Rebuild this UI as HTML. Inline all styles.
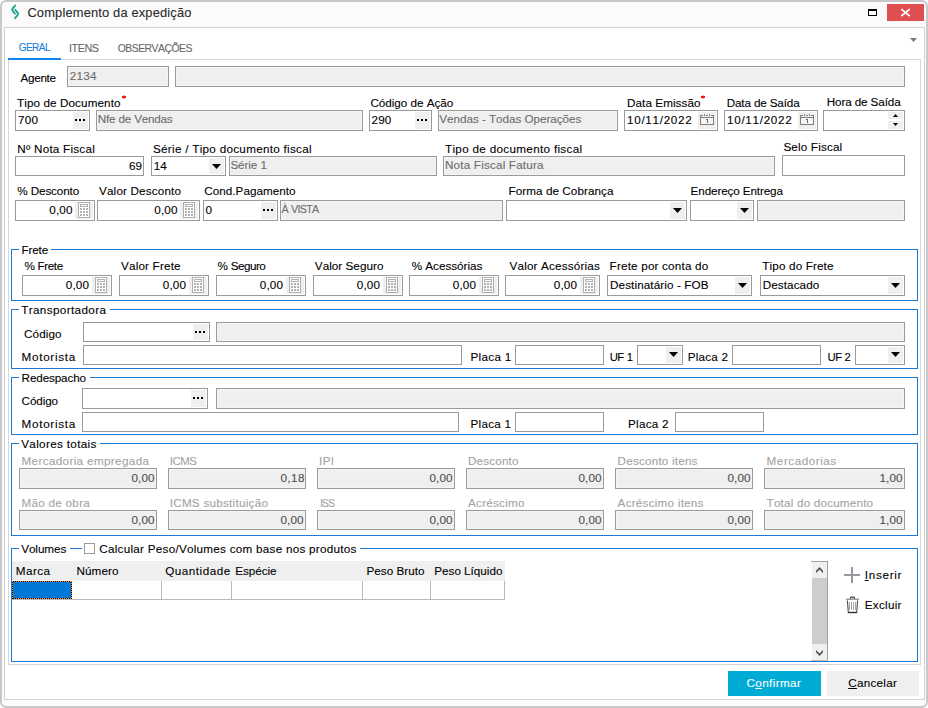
<!DOCTYPE html>
<html lang="pt-BR"><head><meta charset="utf-8"><title>Complemento da expedição</title>
<style>
html,body{margin:0;padding:0;background:#fff}
body{width:928px;height:708px;position:relative;overflow:hidden;font-family:"Liberation Sans",sans-serif;font-size:11.7px}
i,b,svg,#win,#inner,#tab{position:absolute;display:block;box-sizing:border-box}
b{font-weight:normal;font-style:normal;white-space:nowrap;line-height:1;color:#000;font-kerning:none;font-variant-ligatures:none;-webkit-text-stroke:0.1px currentColor}
u{text-decoration:underline;text-underline-offset:1px;text-decoration-thickness:1px}
i.b{border:1px solid #9a9a9a;background:#fff}
i.d{background:#efefef;box-shadow:inset 0 0 0 1px #f4f4f4}
#win{left:0;top:0;width:928px;height:708px;border:2px solid #c9c9c9;border-radius:6px;background:#fbfbfb}
#inner{left:4px;top:27px;width:921px;height:673px;border:1px solid #d2d2d2;background:#fff}
#tab{left:8px;top:59px;width:913px;height:606px;border:1px solid #d6d6d6;background:#fff}
</style></head>
<body>
<div id="win"></div>
<div id="inner"></div>
<svg style="left:9px;top:3px" width="12" height="18" viewBox="9 3 12 18"><path d="M15.2 5.5L12.5 8.7Q11.8 9.6 12.5 10.5L14.9 13.7" fill="none" stroke="#0f9f84" stroke-width="1.8" stroke-linecap="round" stroke-linejoin="round"/><path d="M15.2 9.8L17.7 12.9Q18.4 13.8 17.7 14.7L15.1 18.2" fill="none" stroke="#0f9f84" stroke-width="1.8" stroke-linecap="round" stroke-linejoin="round"/></svg>
<b style="left:27.40px;top:7.00px;font-size:12.9px;letter-spacing:0.154px;color:#2b2b2b">Complemento da expedição</b>
<i style="left:868px;top:9px;width:9px;height:7px;border:1px solid #000;border-top-width:2px;box-sizing:border-box;background:#fff"></i>
<i style="left:887px;top:4px;width:37px;height:17px;background:#e04f4f;"></i>
<svg style="left:900px;top:8px" width="11" height="9" viewBox="0 0 11 9"><path d="M1.3 1.2L9.7 8M9.7 1.2L1.3 8" stroke="#fff" stroke-width="1.7" fill="none"/></svg>
<div id="tab"></div>
<i style="left:8px;top:58px;width:53px;height:2px;background:#0f86ee;"></i>
<b style="left:18.70px;top:43.00px;font-size:10.0px;letter-spacing:-0.510px;color:#1a7fd8">GERAL</b>
<b style="left:69.00px;top:43.00px;font-size:10.8px;letter-spacing:-0.448px;color:#686868">ITENS</b>
<b style="left:117.70px;top:44.00px;font-size:10.4px;letter-spacing:-0.495px;color:#686868">OBSERVAÇÕES</b>
<svg style="left:910px;top:38px" width="7" height="4" viewBox="0 0 7 4"><path d="M0 0H7L3.5 4Z" fill="#7a7a7a"/></svg>
<b style="left:20.40px;top:72.00px;letter-spacing:-0.269px">Agente</b>
<i class="b d" style="left:67px;top:66px;width:102px;height:21px"></i>
<b style="left:69.80px;top:70.00px;letter-spacing:0.200px;color:#6d6d6d">2134</b>
<i class="b d" style="left:175px;top:66px;width:730px;height:21px"></i>
<b style="left:17.00px;top:97.00px;letter-spacing:0.094px">Tipo de Documento</b>
<i style="left:123px;top:95px;width:2px;height:4px;background:#ffab8e;"></i>
<i style="left:122px;top:96px;width:4px;height:2px;background:#fb1212;"></i>
<i class="b" style="left:15px;top:110px;width:75px;height:21px"></i>
<i style="left:73px;top:112px;width:15px;height:17px;background:#efefef;"></i>
<i style="left:75px;top:119px;width:2px;height:2px;background:#000;"></i>
<i style="left:79px;top:119px;width:2px;height:2px;background:#000;"></i>
<i style="left:83px;top:119px;width:2px;height:2px;background:#000;"></i>
<b style="left:18.00px;top:114.00px;letter-spacing:0.250px">700</b>
<i class="b d" style="left:96px;top:110px;width:267px;height:21px"></i>
<b style="left:97.70px;top:113.00px;letter-spacing:-0.248px;word-spacing:0.248px;color:#6d6d6d">Nfe de Vendas</b>
<b style="left:370.40px;top:97.00px;letter-spacing:-0.029px">Código de Ação</b>
<i class="b" style="left:369px;top:110px;width:63px;height:21px"></i>
<i style="left:415px;top:112px;width:15px;height:17px;background:#efefef;"></i>
<i style="left:417px;top:119px;width:2px;height:2px;background:#000;"></i>
<i style="left:421px;top:119px;width:2px;height:2px;background:#000;"></i>
<i style="left:425px;top:119px;width:2px;height:2px;background:#000;"></i>
<b style="left:371.60px;top:114.00px;letter-spacing:0.050px">290</b>
<i class="b d" style="left:438px;top:110px;width:180px;height:21px"></i>
<b style="left:439.30px;top:113.00px;letter-spacing:-0.038px;color:#6d6d6d">Vendas - Todas Operações</b>
<b style="left:627.00px;top:97.00px;letter-spacing:0.068px">Data Emissão</b>
<i style="left:702px;top:95px;width:2px;height:4px;background:#ffab8e;"></i>
<i style="left:701px;top:96px;width:4px;height:2px;background:#fb1212;"></i>
<i class="b" style="left:624px;top:110px;width:94px;height:21px"></i>
<i style="left:698px;top:112px;width:18px;height:17px;background:#efefef;"></i>
<svg style="left:700px;top:114px" width="14" height="11" viewBox="0 0 14 11" shape-rendering="crispEdges"><rect x="0.5" y="3.5" width="13" height="7" fill="#f4f4f4" stroke="#808080"/><path d="M0.5 1V4 M13.5 1V4" stroke="#808080" fill="none"/><path d="M1 1.5H3 M6 1.5H8 M11 1.5H13" stroke="#808080" fill="none"/><path d="M4.5 0V2 M9.5 0V2" stroke="#808080" fill="none"/><path d="M6 5.5H7.5V9" stroke="#6a6a6a" fill="none"/></svg>
<b style="left:627.00px;top:114.00px;letter-spacing:0.689px">10/11/2022</b>
<b style="left:726.70px;top:97.00px;letter-spacing:-0.144px">Data de Saída</b>
<i class="b" style="left:724px;top:110px;width:94px;height:21px"></i>
<i style="left:798px;top:112px;width:18px;height:17px;background:#efefef;"></i>
<svg style="left:800px;top:114px" width="14" height="11" viewBox="0 0 14 11" shape-rendering="crispEdges"><rect x="0.5" y="3.5" width="13" height="7" fill="#f4f4f4" stroke="#808080"/><path d="M0.5 1V4 M13.5 1V4" stroke="#808080" fill="none"/><path d="M1 1.5H3 M6 1.5H8 M11 1.5H13" stroke="#808080" fill="none"/><path d="M4.5 0V2 M9.5 0V2" stroke="#808080" fill="none"/><path d="M6 5.5H7.5V9" stroke="#6a6a6a" fill="none"/></svg>
<b style="left:727.00px;top:114.00px;letter-spacing:0.689px">10/11/2022</b>
<b style="left:826.70px;top:96.00px;letter-spacing:-0.114px">Hora de Saída</b>
<i class="b" style="left:823px;top:110px;width:82px;height:21px"></i>
<i style="left:888px;top:112px;width:15px;height:7px;background:#efefef;"></i>
<i style="left:888px;top:121px;width:15px;height:8px;background:#efefef;"></i>
<svg style="left:893px;top:114px" width="5" height="3" viewBox="0 0 5 3"><path d="M0 3H5L2.5 0Z" fill="#000"/></svg>
<svg style="left:893px;top:123px" width="5" height="3" viewBox="0 0 5 3"><path d="M0 0H5L2.5 3Z" fill="#000"/></svg>
<b style="left:17.30px;top:143.00px;letter-spacing:0.237px">Nº Nota Fiscal</b>
<i class="b" style="left:15px;top:156px;width:129px;height:20px"></i>
<b style="left:129.00px;top:160.00px">69</b>
<b style="left:153.00px;top:143.00px;letter-spacing:0.282px">Série / Tipo documento fiscal</b>
<i class="b" style="left:151px;top:156px;width:75px;height:20px"></i>
<i style="left:209px;top:158px;width:15px;height:16px;background:#efefef;"></i>
<svg style="left:212px;top:164px" width="9" height="5" viewBox="0 0 9 5"><path d="M0 0H9L4.5 5Z" fill="#000"/></svg>
<b style="left:153.80px;top:160.00px">14</b>
<i class="b d" style="left:229px;top:156px;width:208px;height:20px"></i>
<b style="left:230.40px;top:159.00px;letter-spacing:-0.089px;color:#6d6d6d">Série 1</b>
<b style="left:445.00px;top:143.00px;letter-spacing:0.311px">Tipo de documento fiscal</b>
<i class="b d" style="left:443px;top:156px;width:332px;height:20px"></i>
<b style="left:445.00px;top:159.00px;letter-spacing:0.178px;color:#6d6d6d">Nota Fiscal Fatura</b>
<b style="left:783.40px;top:141.00px;letter-spacing:0.164px">Selo Fiscal</b>
<i class="b" style="left:782px;top:155px;width:123px;height:21px"></i>
<b style="left:17.30px;top:185.00px;letter-spacing:-0.124px">% Desconto</b>
<i class="b" style="left:15px;top:200px;width:80px;height:21px"></i>
<i style="left:75px;top:202px;width:18px;height:17px;background:#efefef;"></i>
<svg style="left:78px;top:202px" width="12" height="16" viewBox="0 0 12 16" shape-rendering="crispEdges"><rect x="0.5" y="0.5" width="11" height="15" fill="#fff" stroke="#b0b0b0"/><rect x="2.5" y="2.5" width="7" height="2" fill="#fff" stroke="#b0b0b0"/><rect x="2" y="6" width="2" height="2" fill="#b2b2b2"/><rect x="5" y="6" width="2" height="2" fill="#b2b2b2"/><rect x="8" y="6" width="2" height="2" fill="#b2b2b2"/><rect x="2" y="9" width="2" height="2" fill="#b2b2b2"/><rect x="5" y="9" width="2" height="2" fill="#b2b2b2"/><rect x="8" y="9" width="2" height="2" fill="#b2b2b2"/><rect x="2" y="12" width="2" height="2" fill="#b2b2b2"/><rect x="5" y="12" width="2" height="2" fill="#b2b2b2"/><rect x="8" y="12" width="2" height="2" fill="#b2b2b2"/></svg>
<b style="left:49.30px;top:204.00px;letter-spacing:0.151px">0,00</b>
<b style="left:99.00px;top:185.00px;letter-spacing:0.161px">Valor Desconto</b>
<i class="b" style="left:97px;top:200px;width:103px;height:21px"></i>
<i style="left:180px;top:202px;width:18px;height:17px;background:#efefef;"></i>
<svg style="left:183px;top:202px" width="12" height="16" viewBox="0 0 12 16" shape-rendering="crispEdges"><rect x="0.5" y="0.5" width="11" height="15" fill="#fff" stroke="#b0b0b0"/><rect x="2.5" y="2.5" width="7" height="2" fill="#fff" stroke="#b0b0b0"/><rect x="2" y="6" width="2" height="2" fill="#b2b2b2"/><rect x="5" y="6" width="2" height="2" fill="#b2b2b2"/><rect x="8" y="6" width="2" height="2" fill="#b2b2b2"/><rect x="2" y="9" width="2" height="2" fill="#b2b2b2"/><rect x="5" y="9" width="2" height="2" fill="#b2b2b2"/><rect x="8" y="9" width="2" height="2" fill="#b2b2b2"/><rect x="2" y="12" width="2" height="2" fill="#b2b2b2"/><rect x="5" y="12" width="2" height="2" fill="#b2b2b2"/><rect x="8" y="12" width="2" height="2" fill="#b2b2b2"/></svg>
<b style="left:154.30px;top:204.00px;letter-spacing:0.151px">0,00</b>
<b style="left:204.30px;top:185.00px;letter-spacing:0.018px">Cond.Pagamento</b>
<i class="b" style="left:203px;top:200px;width:75px;height:21px"></i>
<i style="left:261px;top:202px;width:15px;height:17px;background:#efefef;"></i>
<i style="left:263px;top:209px;width:2px;height:2px;background:#000;"></i>
<i style="left:267px;top:209px;width:2px;height:2px;background:#000;"></i>
<i style="left:271px;top:209px;width:2px;height:2px;background:#000;"></i>
<b style="left:205.40px;top:204.00px">0</b>
<i class="b d" style="left:280px;top:200px;width:223px;height:21px"></i>
<b style="left:281.60px;top:204.00px;font-size:10.7px;letter-spacing:-0.690px;word-spacing:0.690px;color:#6d6d6d">À VISTA</b>
<b style="left:508.50px;top:185.00px;letter-spacing:0.066px">Forma de Cobrança</b>
<i class="b" style="left:506px;top:200px;width:181px;height:21px"></i>
<i style="left:670px;top:202px;width:15px;height:17px;background:#efefef;"></i>
<svg style="left:673px;top:208px" width="9" height="5" viewBox="0 0 9 5"><path d="M0 0H9L4.5 5Z" fill="#000"/></svg>
<b style="left:690.60px;top:185.00px;letter-spacing:-0.128px">Endereço Entrega</b>
<i class="b" style="left:690px;top:200px;width:64px;height:21px"></i>
<i style="left:737px;top:202px;width:15px;height:17px;background:#efefef;"></i>
<svg style="left:740px;top:208px" width="9" height="5" viewBox="0 0 9 5"><path d="M0 0H9L4.5 5Z" fill="#000"/></svg>
<i class="b d" style="left:757px;top:200px;width:148px;height:21px"></i>
<i style="left:11px;top:249px;width:8px;height:1px;background:#1979d5;"></i>
<i style="left:51px;top:249px;width:867px;height:1px;background:#1979d5;"></i>
<i style="left:11px;top:249px;width:1px;height:52px;background:#1979d5;"></i>
<i style="left:917px;top:249px;width:1px;height:52px;background:#1979d5;"></i>
<i style="left:11px;top:300px;width:907px;height:1px;background:#1979d5;"></i>
<b style="left:21.60px;top:244.00px;letter-spacing:-0.170px">Frete</b>
<b style="left:24.40px;top:260.00px;letter-spacing:-0.424px;word-spacing:0.424px">% Frete</b>
<i class="b" style="left:22px;top:275px;width:90px;height:21px"></i>
<i style="left:92px;top:277px;width:18px;height:17px;background:#efefef;"></i>
<svg style="left:95px;top:277px" width="12" height="16" viewBox="0 0 12 16" shape-rendering="crispEdges"><rect x="0.5" y="0.5" width="11" height="15" fill="#fff" stroke="#b0b0b0"/><rect x="2.5" y="2.5" width="7" height="2" fill="#fff" stroke="#b0b0b0"/><rect x="2" y="6" width="2" height="2" fill="#b2b2b2"/><rect x="5" y="6" width="2" height="2" fill="#b2b2b2"/><rect x="8" y="6" width="2" height="2" fill="#b2b2b2"/><rect x="2" y="9" width="2" height="2" fill="#b2b2b2"/><rect x="5" y="9" width="2" height="2" fill="#b2b2b2"/><rect x="8" y="9" width="2" height="2" fill="#b2b2b2"/><rect x="2" y="12" width="2" height="2" fill="#b2b2b2"/><rect x="5" y="12" width="2" height="2" fill="#b2b2b2"/><rect x="8" y="12" width="2" height="2" fill="#b2b2b2"/></svg>
<b style="left:65.70px;top:279.00px;letter-spacing:0.218px">0,00</b>
<b style="left:121.00px;top:260.00px;letter-spacing:0.179px">Valor Frete</b>
<i class="b" style="left:119px;top:275px;width:90px;height:21px"></i>
<i style="left:189px;top:277px;width:18px;height:17px;background:#efefef;"></i>
<svg style="left:192px;top:277px" width="12" height="16" viewBox="0 0 12 16" shape-rendering="crispEdges"><rect x="0.5" y="0.5" width="11" height="15" fill="#fff" stroke="#b0b0b0"/><rect x="2.5" y="2.5" width="7" height="2" fill="#fff" stroke="#b0b0b0"/><rect x="2" y="6" width="2" height="2" fill="#b2b2b2"/><rect x="5" y="6" width="2" height="2" fill="#b2b2b2"/><rect x="8" y="6" width="2" height="2" fill="#b2b2b2"/><rect x="2" y="9" width="2" height="2" fill="#b2b2b2"/><rect x="5" y="9" width="2" height="2" fill="#b2b2b2"/><rect x="8" y="9" width="2" height="2" fill="#b2b2b2"/><rect x="2" y="12" width="2" height="2" fill="#b2b2b2"/><rect x="5" y="12" width="2" height="2" fill="#b2b2b2"/><rect x="8" y="12" width="2" height="2" fill="#b2b2b2"/></svg>
<b style="left:162.70px;top:279.00px;letter-spacing:0.218px">0,00</b>
<b style="left:217.60px;top:260.00px;letter-spacing:-0.521px;word-spacing:0.521px">% Seguro</b>
<i class="b" style="left:216px;top:275px;width:90px;height:21px"></i>
<i style="left:286px;top:277px;width:18px;height:17px;background:#efefef;"></i>
<svg style="left:289px;top:277px" width="12" height="16" viewBox="0 0 12 16" shape-rendering="crispEdges"><rect x="0.5" y="0.5" width="11" height="15" fill="#fff" stroke="#b0b0b0"/><rect x="2.5" y="2.5" width="7" height="2" fill="#fff" stroke="#b0b0b0"/><rect x="2" y="6" width="2" height="2" fill="#b2b2b2"/><rect x="5" y="6" width="2" height="2" fill="#b2b2b2"/><rect x="8" y="6" width="2" height="2" fill="#b2b2b2"/><rect x="2" y="9" width="2" height="2" fill="#b2b2b2"/><rect x="5" y="9" width="2" height="2" fill="#b2b2b2"/><rect x="8" y="9" width="2" height="2" fill="#b2b2b2"/><rect x="2" y="12" width="2" height="2" fill="#b2b2b2"/><rect x="5" y="12" width="2" height="2" fill="#b2b2b2"/><rect x="8" y="12" width="2" height="2" fill="#b2b2b2"/></svg>
<b style="left:259.70px;top:279.00px;letter-spacing:0.218px">0,00</b>
<b style="left:314.80px;top:260.00px;letter-spacing:0.035px">Valor Seguro</b>
<i class="b" style="left:313px;top:275px;width:90px;height:21px"></i>
<i style="left:383px;top:277px;width:18px;height:17px;background:#efefef;"></i>
<svg style="left:386px;top:277px" width="12" height="16" viewBox="0 0 12 16" shape-rendering="crispEdges"><rect x="0.5" y="0.5" width="11" height="15" fill="#fff" stroke="#b0b0b0"/><rect x="2.5" y="2.5" width="7" height="2" fill="#fff" stroke="#b0b0b0"/><rect x="2" y="6" width="2" height="2" fill="#b2b2b2"/><rect x="5" y="6" width="2" height="2" fill="#b2b2b2"/><rect x="8" y="6" width="2" height="2" fill="#b2b2b2"/><rect x="2" y="9" width="2" height="2" fill="#b2b2b2"/><rect x="5" y="9" width="2" height="2" fill="#b2b2b2"/><rect x="8" y="9" width="2" height="2" fill="#b2b2b2"/><rect x="2" y="12" width="2" height="2" fill="#b2b2b2"/><rect x="5" y="12" width="2" height="2" fill="#b2b2b2"/><rect x="8" y="12" width="2" height="2" fill="#b2b2b2"/></svg>
<b style="left:356.70px;top:279.00px;letter-spacing:0.218px">0,00</b>
<b style="left:411.70px;top:260.00px;letter-spacing:-0.014px">% Acessórias</b>
<i class="b" style="left:409px;top:275px;width:90px;height:21px"></i>
<i style="left:479px;top:277px;width:18px;height:17px;background:#efefef;"></i>
<svg style="left:482px;top:277px" width="12" height="16" viewBox="0 0 12 16" shape-rendering="crispEdges"><rect x="0.5" y="0.5" width="11" height="15" fill="#fff" stroke="#b0b0b0"/><rect x="2.5" y="2.5" width="7" height="2" fill="#fff" stroke="#b0b0b0"/><rect x="2" y="6" width="2" height="2" fill="#b2b2b2"/><rect x="5" y="6" width="2" height="2" fill="#b2b2b2"/><rect x="8" y="6" width="2" height="2" fill="#b2b2b2"/><rect x="2" y="9" width="2" height="2" fill="#b2b2b2"/><rect x="5" y="9" width="2" height="2" fill="#b2b2b2"/><rect x="8" y="9" width="2" height="2" fill="#b2b2b2"/><rect x="2" y="12" width="2" height="2" fill="#b2b2b2"/><rect x="5" y="12" width="2" height="2" fill="#b2b2b2"/><rect x="8" y="12" width="2" height="2" fill="#b2b2b2"/></svg>
<b style="left:452.70px;top:279.00px;letter-spacing:0.218px">0,00</b>
<b style="left:509.50px;top:260.00px;letter-spacing:0.177px">Valor Acessórias</b>
<i class="b" style="left:505px;top:275px;width:95px;height:21px"></i>
<i style="left:580px;top:277px;width:18px;height:17px;background:#efefef;"></i>
<svg style="left:583px;top:277px" width="12" height="16" viewBox="0 0 12 16" shape-rendering="crispEdges"><rect x="0.5" y="0.5" width="11" height="15" fill="#fff" stroke="#b0b0b0"/><rect x="2.5" y="2.5" width="7" height="2" fill="#fff" stroke="#b0b0b0"/><rect x="2" y="6" width="2" height="2" fill="#b2b2b2"/><rect x="5" y="6" width="2" height="2" fill="#b2b2b2"/><rect x="8" y="6" width="2" height="2" fill="#b2b2b2"/><rect x="2" y="9" width="2" height="2" fill="#b2b2b2"/><rect x="5" y="9" width="2" height="2" fill="#b2b2b2"/><rect x="8" y="9" width="2" height="2" fill="#b2b2b2"/><rect x="2" y="12" width="2" height="2" fill="#b2b2b2"/><rect x="5" y="12" width="2" height="2" fill="#b2b2b2"/><rect x="8" y="12" width="2" height="2" fill="#b2b2b2"/></svg>
<b style="left:553.70px;top:279.00px;letter-spacing:0.218px">0,00</b>
<b style="left:609.60px;top:260.00px;letter-spacing:0.182px">Frete por conta do</b>
<i class="b" style="left:607px;top:275px;width:145px;height:21px"></i>
<i style="left:735px;top:277px;width:15px;height:17px;background:#efefef;"></i>
<svg style="left:738px;top:283px" width="9" height="5" viewBox="0 0 9 5"><path d="M0 0H9L4.5 5Z" fill="#000"/></svg>
<b style="left:610.00px;top:279.00px;letter-spacing:0.101px">Destinatário - FOB</b>
<b style="left:762.30px;top:260.00px;letter-spacing:0.141px">Tipo do Frete</b>
<i class="b" style="left:760px;top:275px;width:145px;height:21px"></i>
<i style="left:888px;top:277px;width:15px;height:17px;background:#efefef;"></i>
<svg style="left:891px;top:283px" width="9" height="5" viewBox="0 0 9 5"><path d="M0 0H9L4.5 5Z" fill="#000"/></svg>
<b style="left:762.80px;top:279.00px;letter-spacing:0.066px">Destacado</b>
<i style="left:11px;top:309px;width:8px;height:1px;background:#1979d5;"></i>
<i style="left:110px;top:309px;width:808px;height:1px;background:#1979d5;"></i>
<i style="left:11px;top:309px;width:1px;height:60px;background:#1979d5;"></i>
<i style="left:917px;top:309px;width:1px;height:60px;background:#1979d5;"></i>
<i style="left:11px;top:368px;width:907px;height:1px;background:#1979d5;"></i>
<b style="left:21.20px;top:304.00px;letter-spacing:0.369px">Transportadora</b>
<b style="left:24.00px;top:328.00px;letter-spacing:0.093px">Código</b>
<i class="b" style="left:83px;top:322px;width:127px;height:20px"></i>
<i style="left:193px;top:324px;width:15px;height:16px;background:#efefef;"></i>
<i style="left:195px;top:331px;width:2px;height:2px;background:#000;"></i>
<i style="left:199px;top:331px;width:2px;height:2px;background:#000;"></i>
<i style="left:203px;top:331px;width:2px;height:2px;background:#000;"></i>
<i class="b d" style="left:216px;top:322px;width:689px;height:20px"></i>
<b style="left:21.60px;top:351.00px;letter-spacing:0.692px">Motorista</b>
<i class="b" style="left:83px;top:345px;width:379px;height:20px"></i>
<b style="left:470.50px;top:351.00px;letter-spacing:0.286px">Placa 1</b>
<i class="b" style="left:515px;top:345px;width:89px;height:20px"></i>
<b style="left:609.80px;top:352.00px;font-size:11.3px;letter-spacing:-0.649px;word-spacing:0.649px">UF 1</b>
<i class="b" style="left:637px;top:345px;width:46px;height:20px"></i>
<i style="left:666px;top:347px;width:15px;height:16px;background:#efefef;"></i>
<svg style="left:669px;top:352px" width="9" height="5" viewBox="0 0 9 5"><path d="M0 0H9L4.5 5Z" fill="#000"/></svg>
<b style="left:687.80px;top:351.00px;letter-spacing:0.186px">Placa 2</b>
<i class="b" style="left:732px;top:345px;width:89px;height:20px"></i>
<b style="left:827.60px;top:352.00px;font-size:11.3px;letter-spacing:-0.599px;word-spacing:0.599px">UF 2</b>
<i class="b" style="left:855px;top:345px;width:50px;height:20px"></i>
<i style="left:888px;top:347px;width:15px;height:16px;background:#efefef;"></i>
<svg style="left:891px;top:352px" width="9" height="5" viewBox="0 0 9 5"><path d="M0 0H9L4.5 5Z" fill="#000"/></svg>
<i style="left:11px;top:377px;width:8px;height:1px;background:#1979d5;"></i>
<i style="left:90px;top:377px;width:828px;height:1px;background:#1979d5;"></i>
<i style="left:11px;top:377px;width:1px;height:58px;background:#1979d5;"></i>
<i style="left:917px;top:377px;width:1px;height:58px;background:#1979d5;"></i>
<i style="left:11px;top:434px;width:907px;height:1px;background:#1979d5;"></i>
<b style="left:21.60px;top:372.00px;letter-spacing:-0.136px">Redespacho</b>
<b style="left:21.60px;top:395.00px;letter-spacing:-0.107px">Código</b>
<i class="b" style="left:82px;top:388px;width:126px;height:21px"></i>
<i style="left:191px;top:390px;width:15px;height:17px;background:#efefef;"></i>
<i style="left:193px;top:397px;width:2px;height:2px;background:#000;"></i>
<i style="left:197px;top:397px;width:2px;height:2px;background:#000;"></i>
<i style="left:201px;top:397px;width:2px;height:2px;background:#000;"></i>
<i class="b d" style="left:216px;top:388px;width:689px;height:21px"></i>
<b style="left:21.60px;top:418.00px;letter-spacing:0.692px">Motorista</b>
<i class="b" style="left:82px;top:412px;width:377px;height:20px"></i>
<b style="left:470.50px;top:418.00px;letter-spacing:0.253px">Placa 1</b>
<i class="b" style="left:515px;top:412px;width:89px;height:20px"></i>
<b style="left:628.00px;top:418.00px;letter-spacing:0.253px">Placa 2</b>
<i class="b" style="left:675px;top:412px;width:89px;height:20px"></i>
<i style="left:11px;top:443px;width:8px;height:1px;background:#1979d5;"></i>
<i style="left:100px;top:443px;width:818px;height:1px;background:#1979d5;"></i>
<i style="left:11px;top:443px;width:1px;height:93px;background:#1979d5;"></i>
<i style="left:917px;top:443px;width:1px;height:93px;background:#1979d5;"></i>
<i style="left:11px;top:535px;width:907px;height:1px;background:#1979d5;"></i>
<b style="left:21.20px;top:438.00px;letter-spacing:0.333px">Valores totais</b>
<b style="left:21.50px;top:455.00px;letter-spacing:0.351px;color:#a3a3a3">Mercadoria empregada</b>
<i class="b d" style="left:19px;top:468px;width:138px;height:21px"></i>
<b style="left:131.40px;top:472.00px;letter-spacing:0.151px;color:#4d4d4d">0,00</b>
<b style="left:21.50px;top:497.00px;letter-spacing:0.268px;color:#a3a3a3">Mão de obra</b>
<i class="b d" style="left:19px;top:510px;width:138px;height:20px"></i>
<b style="left:131.40px;top:514.00px;letter-spacing:0.151px;color:#4d4d4d">0,00</b>
<b style="left:169.70px;top:456.00px;font-size:11.5px;letter-spacing:-0.493px;color:#a3a3a3">ICMS</b>
<i class="b d" style="left:168px;top:468px;width:138px;height:21px"></i>
<b style="left:280.40px;top:472.00px;letter-spacing:0.484px;color:#4d4d4d">0,18</b>
<b style="left:169.70px;top:497.00px;letter-spacing:0.251px;color:#a3a3a3">ICMS substituição</b>
<i class="b d" style="left:168px;top:510px;width:138px;height:20px"></i>
<b style="left:280.40px;top:514.00px;letter-spacing:0.151px;color:#4d4d4d">0,00</b>
<b style="left:319.00px;top:455.00px;letter-spacing:0.379px;color:#a3a3a3">IPI</b>
<i class="b d" style="left:317px;top:468px;width:138px;height:21px"></i>
<b style="left:429.40px;top:472.00px;letter-spacing:0.151px;color:#4d4d4d">0,00</b>
<b style="left:320.00px;top:498.00px;font-size:10.7px;letter-spacing:-1.099px;color:#a3a3a3">ISS</b>
<i class="b d" style="left:317px;top:510px;width:138px;height:20px"></i>
<b style="left:429.40px;top:514.00px;letter-spacing:0.151px;color:#4d4d4d">0,00</b>
<b style="left:468.00px;top:455.00px;letter-spacing:0.161px;color:#a3a3a3">Desconto</b>
<i class="b d" style="left:466px;top:468px;width:138px;height:21px"></i>
<b style="left:578.40px;top:472.00px;letter-spacing:0.151px;color:#4d4d4d">0,00</b>
<b style="left:468.00px;top:497.00px;letter-spacing:0.244px;color:#a3a3a3">Acréscimo</b>
<i class="b d" style="left:466px;top:510px;width:138px;height:20px"></i>
<b style="left:578.40px;top:514.00px;letter-spacing:0.151px;color:#4d4d4d">0,00</b>
<b style="left:617.60px;top:455.00px;letter-spacing:0.195px;color:#a3a3a3">Desconto itens</b>
<i class="b d" style="left:615px;top:468px;width:138px;height:21px"></i>
<b style="left:727.40px;top:472.00px;letter-spacing:0.151px;color:#4d4d4d">0,00</b>
<b style="left:617.60px;top:497.00px;letter-spacing:0.240px;color:#a3a3a3">Acréscimo itens</b>
<i class="b d" style="left:615px;top:510px;width:138px;height:20px"></i>
<b style="left:727.40px;top:514.00px;letter-spacing:0.151px;color:#4d4d4d">0,00</b>
<b style="left:766.60px;top:455.00px;letter-spacing:0.524px;color:#a3a3a3">Mercadorias</b>
<i class="b d" style="left:764px;top:468px;width:141px;height:21px"></i>
<b style="left:879.40px;top:472.00px;letter-spacing:0.151px;color:#4d4d4d">1,00</b>
<b style="left:766.60px;top:497.00px;letter-spacing:0.188px;color:#a3a3a3">Total do documento</b>
<i class="b d" style="left:764px;top:510px;width:141px;height:20px"></i>
<b style="left:879.40px;top:514.00px;letter-spacing:0.151px;color:#4d4d4d">1,00</b>
<i style="left:11px;top:548px;width:8px;height:1px;background:#1979d5;"></i>
<i style="left:70px;top:548px;width:12px;height:1px;background:#1979d5;"></i>
<i style="left:360px;top:548px;width:558px;height:1px;background:#1979d5;"></i>
<i style="left:11px;top:548px;width:1px;height:114px;background:#1979d5;"></i>
<i style="left:917px;top:548px;width:1px;height:114px;background:#1979d5;"></i>
<i style="left:11px;top:661px;width:907px;height:1px;background:#1979d5;"></i>
<b style="left:21.20px;top:543.00px;letter-spacing:-0.055px">Volumes</b>
<i style="left:84px;top:543px;width:11px;height:11px;border:1px solid #9a9a9a;box-sizing:border-box;background:#fff"></i>
<b style="left:99.30px;top:543.00px;letter-spacing:0.258px">Calcular Peso/Volumes com base nos produtos</b>
<i style="left:12px;top:561px;width:493px;height:20px;background:#efefef;"></i>
<b style="left:15.80px;top:565.00px;letter-spacing:0.432px">Marca</b>
<b style="left:76.50px;top:565.00px;letter-spacing:0.086px">Número</b>
<b style="left:165.20px;top:565.00px;letter-spacing:0.507px">Quantidade</b>
<b style="left:235.30px;top:565.00px;letter-spacing:-0.063px">Espécie</b>
<b style="left:366.50px;top:565.00px;letter-spacing:0.031px">Peso Bruto</b>
<b style="left:434.30px;top:565.00px;letter-spacing:-0.012px">Peso Líquido</b>
<i style="left:12px;top:599px;width:493px;height:1px;background:#bababa;"></i>
<i style="left:161px;top:581px;width:1px;height:19px;background:#bababa;"></i>
<i style="left:231px;top:581px;width:1px;height:19px;background:#bababa;"></i>
<i style="left:362px;top:581px;width:1px;height:19px;background:#bababa;"></i>
<i style="left:430px;top:581px;width:1px;height:19px;background:#bababa;"></i>
<i style="left:504px;top:581px;width:1px;height:19px;background:#bababa;"></i>
<i style="left:12px;top:581px;width:60px;height:18px;background:#0078d7;"></i>
<i style="left:12px;top:581px;width:60px;height:1px;background:repeating-linear-gradient(90deg,#f7901e 0 1px,#000 1px 2px);"></i>
<i style="left:12px;top:598px;width:60px;height:1px;background:repeating-linear-gradient(90deg,#f7901e 0 1px,#000 1px 2px);"></i>
<i style="left:12px;top:581px;width:1px;height:18px;background:repeating-linear-gradient(180deg,#f7901e 0 1px,#000 1px 2px);"></i>
<i style="left:71px;top:581px;width:1px;height:18px;background:repeating-linear-gradient(180deg,#f7901e 0 1px,#000 1px 2px);"></i>
<i style="left:811px;top:561px;width:17px;height:1px;background:#a0a0a0;"></i>
<i style="left:827px;top:561px;width:1px;height:100px;background:#a0a0a0;"></i>
<i style="left:811px;top:660px;width:17px;height:1px;background:#c4bcb4;"></i>
<i style="left:812px;top:562px;width:15px;height:16px;background:#f0f0f0;"></i>
<i style="left:812px;top:578px;width:15px;height:66px;background:#cdcdcd;"></i>
<i style="left:812px;top:644px;width:15px;height:16px;background:#f0f0f0;"></i>
<svg style="left:815px;top:566px" width="10" height="8" viewBox="815 566 10 8"><path d="M816 570.7L819.5 567L823 570.7V573L819.5 569.5L816 573Z" fill="#4f4f4f"/></svg>
<svg style="left:815px;top:649px" width="10" height="8" viewBox="815 649 10 8"><path d="M816 652.3L819.5 656L823 652.3V650L819.5 653.5L816 650Z" fill="#4f4f4f"/></svg>
<i style="left:844px;top:574px;width:16px;height:2px;background:#9797a1;"></i>
<i style="left:851px;top:567px;width:2px;height:16px;background:#9797a1;"></i>
<b style="left:864.70px;top:569.00px;letter-spacing:0.720px"><u>I</u>nserir</b>
<svg style="left:845px;top:596px" width="15" height="18" viewBox="845 596 15 18"><path d="M850.5 599V598Q850.5 597.2 851.5 597.2H853.5Q854.5 597.2 854.5 598V599" fill="none" stroke="#3c3c3c" stroke-width="1.2"/><rect x="846" y="598.5" width="13" height="1.6" fill="#9c9c9c"/><path d="M847.4 600.5L848.3 612.4H856.7L857.6 600.5" fill="#fff" stroke="#4a4a55" stroke-width="1.1"/><path d="M849.5 602V610M851.5 602V610M853.5 602V610M855.5 602V610" stroke="#a4a4a4" stroke-width="1"/><rect x="848.2" y="612" width="8.6" height="1.2" fill="#2e2e2e"/></svg>
<b style="left:864.70px;top:599.00px;letter-spacing:0.287px">Excluir</b>
<i style="left:728px;top:671px;width:93px;height:25px;background:#00abd6;"></i>
<b style="left:746.40px;top:677.00px;letter-spacing:0.399px;color:#fff">C<u>o</u>nfirmar</b>
<i style="left:827px;top:671px;width:92px;height:25px;background:#efefef;"></i>
<b style="left:848.20px;top:677.00px;letter-spacing:0.274px"><u>C</u>ancelar</b>
</body></html>
